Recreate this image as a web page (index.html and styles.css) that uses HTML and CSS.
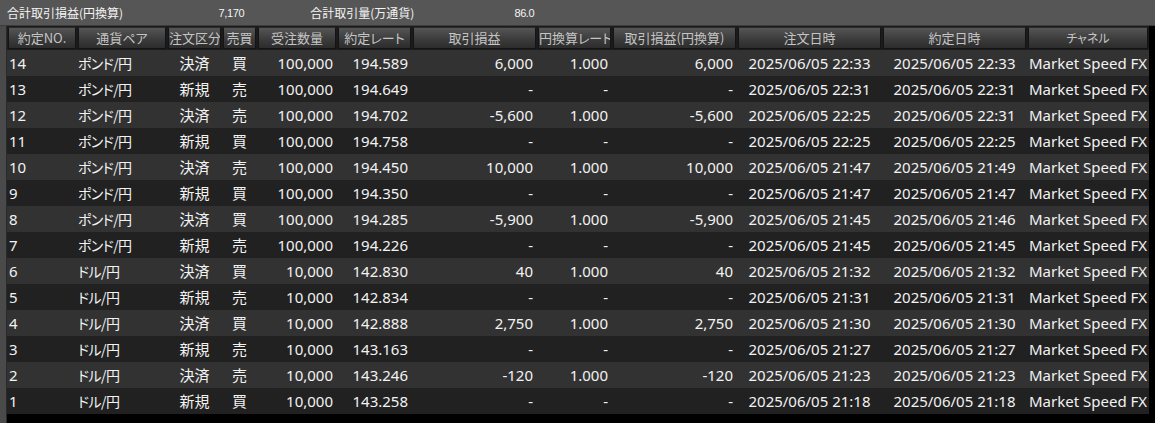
FILE: index.html
```html
<!DOCTYPE html>
<html lang="ja">
<head>
    <meta charset="UTF-8">
    <title>約定照会</title>
    <link rel="stylesheet" href="styles.css">
</head>
<body>
    <div class="summary">
        <span class="sum-label">合計取引損益(円換算)</span>
        <span class="sum-value pl">7,170</span>
        <span class="sum-label">合計取引量(万通貨)</span>
        <span class="sum-value vol">86.0</span>
    </div>

    <div class="frame">
        <div class="side"></div>
        <div class="grid">
            <div class="head">
                <div class="hcell">約定NO.</div>
                <div class="hcell">通貨ペア</div>
                <div class="hcell">注文区分</div>
                <div class="hcell">売買</div>
                <div class="hcell">受注数量</div>
                <div class="hcell">約定レート</div>
                <div class="hcell">取引損益</div>
                <div class="hcell">円換算レート</div>
                <div class="hcell">取引損益(円換算)</div>
                <div class="hcell">注文日時</div>
                <div class="hcell">約定日時</div>
                <div class="hcell small">チャネル</div>
            </div>

            <div class="row odd">
                <div class="c-left">14</div><div class="c-pair">ポンド/円</div><div class="c-mid">決済</div><div class="c-mid">買</div>
                <div class="c-right">100,000</div><div class="c-right">194.589</div><div class="c-right">6,000</div><div class="c-right">1.000</div>
                <div class="c-right">6,000</div><div class="c-mid">2025/06/05 22:33</div><div class="c-mid">2025/06/05 22:33</div><div class="c-chan">Market Speed FX</div>
            </div>
            <div class="row">
                <div class="c-left">13</div><div class="c-pair">ポンド/円</div><div class="c-mid">新規</div><div class="c-mid">売</div>
                <div class="c-right">100,000</div><div class="c-right">194.649</div><div class="c-right">-</div><div class="c-right">-</div>
                <div class="c-right">-</div><div class="c-mid">2025/06/05 22:31</div><div class="c-mid">2025/06/05 22:31</div><div class="c-chan">Market Speed FX</div>
            </div>
            <div class="row odd">
                <div class="c-left">12</div><div class="c-pair">ポンド/円</div><div class="c-mid">決済</div><div class="c-mid">売</div>
                <div class="c-right">100,000</div><div class="c-right">194.702</div><div class="c-right">-5,600</div><div class="c-right">1.000</div>
                <div class="c-right">-5,600</div><div class="c-mid">2025/06/05 22:25</div><div class="c-mid">2025/06/05 22:31</div><div class="c-chan">Market Speed FX</div>
            </div>
            <div class="row">
                <div class="c-left">11</div><div class="c-pair">ポンド/円</div><div class="c-mid">新規</div><div class="c-mid">買</div>
                <div class="c-right">100,000</div><div class="c-right">194.758</div><div class="c-right">-</div><div class="c-right">-</div>
                <div class="c-right">-</div><div class="c-mid">2025/06/05 22:25</div><div class="c-mid">2025/06/05 22:25</div><div class="c-chan">Market Speed FX</div>
            </div>
            <div class="row odd">
                <div class="c-left">10</div><div class="c-pair">ポンド/円</div><div class="c-mid">決済</div><div class="c-mid">売</div>
                <div class="c-right">100,000</div><div class="c-right">194.450</div><div class="c-right">10,000</div><div class="c-right">1.000</div>
                <div class="c-right">10,000</div><div class="c-mid">2025/06/05 21:47</div><div class="c-mid">2025/06/05 21:49</div><div class="c-chan">Market Speed FX</div>
            </div>
            <div class="row">
                <div class="c-left">9</div><div class="c-pair">ポンド/円</div><div class="c-mid">新規</div><div class="c-mid">買</div>
                <div class="c-right">100,000</div><div class="c-right">194.350</div><div class="c-right">-</div><div class="c-right">-</div>
                <div class="c-right">-</div><div class="c-mid">2025/06/05 21:47</div><div class="c-mid">2025/06/05 21:47</div><div class="c-chan">Market Speed FX</div>
            </div>
            <div class="row odd">
                <div class="c-left">8</div><div class="c-pair">ポンド/円</div><div class="c-mid">決済</div><div class="c-mid">買</div>
                <div class="c-right">100,000</div><div class="c-right">194.285</div><div class="c-right">-5,900</div><div class="c-right">1.000</div>
                <div class="c-right">-5,900</div><div class="c-mid">2025/06/05 21:45</div><div class="c-mid">2025/06/05 21:46</div><div class="c-chan">Market Speed FX</div>
            </div>
            <div class="row">
                <div class="c-left">7</div><div class="c-pair">ポンド/円</div><div class="c-mid">新規</div><div class="c-mid">売</div>
                <div class="c-right">100,000</div><div class="c-right">194.226</div><div class="c-right">-</div><div class="c-right">-</div>
                <div class="c-right">-</div><div class="c-mid">2025/06/05 21:45</div><div class="c-mid">2025/06/05 21:45</div><div class="c-chan">Market Speed FX</div>
            </div>
            <div class="row odd">
                <div class="c-left">6</div><div class="c-pair">ドル/円</div><div class="c-mid">決済</div><div class="c-mid">買</div>
                <div class="c-right">10,000</div><div class="c-right">142.830</div><div class="c-right">40</div><div class="c-right">1.000</div>
                <div class="c-right">40</div><div class="c-mid">2025/06/05 21:32</div><div class="c-mid">2025/06/05 21:32</div><div class="c-chan">Market Speed FX</div>
            </div>
            <div class="row">
                <div class="c-left">5</div><div class="c-pair">ドル/円</div><div class="c-mid">新規</div><div class="c-mid">売</div>
                <div class="c-right">10,000</div><div class="c-right">142.834</div><div class="c-right">-</div><div class="c-right">-</div>
                <div class="c-right">-</div><div class="c-mid">2025/06/05 21:31</div><div class="c-mid">2025/06/05 21:31</div><div class="c-chan">Market Speed FX</div>
            </div>
            <div class="row odd">
                <div class="c-left">4</div><div class="c-pair">ドル/円</div><div class="c-mid">決済</div><div class="c-mid">買</div>
                <div class="c-right">10,000</div><div class="c-right">142.888</div><div class="c-right">2,750</div><div class="c-right">1.000</div>
                <div class="c-right">2,750</div><div class="c-mid">2025/06/05 21:30</div><div class="c-mid">2025/06/05 21:30</div><div class="c-chan">Market Speed FX</div>
            </div>
            <div class="row">
                <div class="c-left">3</div><div class="c-pair">ドル/円</div><div class="c-mid">新規</div><div class="c-mid">売</div>
                <div class="c-right">10,000</div><div class="c-right">143.163</div><div class="c-right">-</div><div class="c-right">-</div>
                <div class="c-right">-</div><div class="c-mid">2025/06/05 21:27</div><div class="c-mid">2025/06/05 21:27</div><div class="c-chan">Market Speed FX</div>
            </div>
            <div class="row odd">
                <div class="c-left">2</div><div class="c-pair">ドル/円</div><div class="c-mid">決済</div><div class="c-mid">売</div>
                <div class="c-right">10,000</div><div class="c-right">143.246</div><div class="c-right">-120</div><div class="c-right">1.000</div>
                <div class="c-right">-120</div><div class="c-mid">2025/06/05 21:23</div><div class="c-mid">2025/06/05 21:23</div><div class="c-chan">Market Speed FX</div>
            </div>
            <div class="row">
                <div class="c-left">1</div><div class="c-pair">ドル/円</div><div class="c-mid">新規</div><div class="c-mid">買</div>
                <div class="c-right">10,000</div><div class="c-right">143.258</div><div class="c-right">-</div><div class="c-right">-</div>
                <div class="c-right">-</div><div class="c-mid">2025/06/05 21:18</div><div class="c-mid">2025/06/05 21:18</div><div class="c-chan">Market Speed FX</div>
            </div>
        </div>
    </div>
</body>
</html>
```

FILE: styles.css
```css
:root {
    --bar: #565656;
    --side: #4a4a4a;
    --row-light: #323232;
    --row-dark: #212121;
    --text: #f2f2f2;
    --head-text: #c4c4c4;
    --cols: 70px 90px 55px 35px 80px 75px 125px 75px 125px 145px 145px 122px;
}

* {
    margin: 0;
    padding: 0;
    box-sizing: border-box;
}

body {
    background-color: #000;
    font-family: "Noto Sans", "Noto Sans CJK JP", sans-serif;
    color: var(--text);
    width: 1155px;
    height: 423px;
    overflow: hidden;
}

/* summary bar */
.summary {
    display: flex;
    align-items: center;
    height: 26px;
    background-color: var(--bar);
    border-bottom: 1px solid #3c3c3c;
    padding-left: 7px;
    font-size: 12px;
    color: #f4f4f4;
}

.sum-label {
    font-family: "Noto Sans CJK JP", sans-serif;
    font-feature-settings: "palt";
}

.sum-value {
    font-family: "Liberation Sans", sans-serif;
    font-size: 11px;
    letter-spacing: -0.4px;
    text-align: right;
}

.pl {
    width: 121px;
    margin-right: 66px;
}

.vol {
    width: 120px;
}

/* table frame */
.frame {
    display: flex;
    height: 397px;
}

.side {
    width: 7px;
    background-color: var(--side);
    border-right: 1px solid #2a2a2a;
}

.grid {
    width: 1142px;
    background-color: #000;
}

.head {
    display: grid;
    grid-template-columns: var(--cols);
    height: 24px;
    padding-top: 1px;
    background-color: #1b1b1b;
}

.hcell {
    margin: 0 1px;
    height: 22px;
    line-height: 20px;
    text-align: center;
    font-family: "Noto Sans CJK JP", sans-serif;
    font-feature-settings: "palt";
    font-size: 13px;
    color: var(--head-text);
    background: linear-gradient(#555555, #3e3e3e 50%, #2c2c2c);
    border: 1px solid #141414;
    border-top-color: #2a2a2a;
    white-space: nowrap;
    overflow: hidden;
}

.hcell.small {
    font-size: 12px;
}

.row {
    display: grid;
    grid-template-columns: var(--cols);
    height: 26px;
    line-height: 26px;
    font-size: 15px;
    background-color: var(--row-dark);
    white-space: nowrap;
}

.row.odd {
    background-color: var(--row-light);
}

.c-left {
    padding-left: 2px;
}

.c-pair {
    padding-left: 1px;
    font-family: "Noto Sans CJK JP", sans-serif;
    font-feature-settings: "palt";
    font-size: 14px;
    letter-spacing: -0.6px;
}

.c-mid {
    text-align: center;
    font-family: "Noto Sans", "Noto Sans CJK JP", sans-serif;
}

.c-right {
    text-align: right;
    padding-right: 4px;
}

.c-chan {
    padding-left: 2px;
}
```
